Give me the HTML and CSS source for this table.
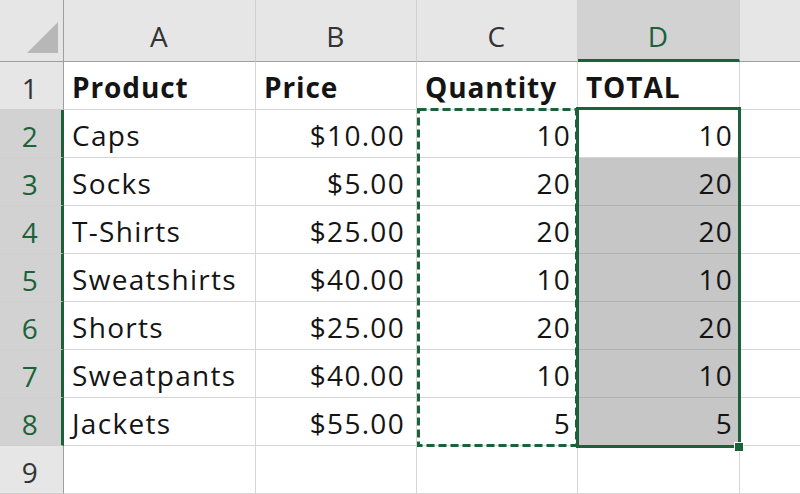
FILE: index.html
```html
<!DOCTYPE html>
<html>
<head>
<meta charset="utf-8">
<link rel="stylesheet" href="styles.css">
</head>
<body>
<div class="sheet">
  <div class="grid">
    <div class="hd corner"><svg class="tri" width="64" height="62" viewBox="0 0 64 62"><polygon points="27,53 58,22 58,53" fill="#b7b7b7"/></svg></div>
    <div class="hd col">A</div>
    <div class="hd col">B</div>
    <div class="hd col">C</div>
    <div class="hd col sel-col">D</div>
    <div class="hd col last"></div>

    <div class="hd row">1</div>
    <div class="c b">Product</div>
    <div class="c b">Price</div>
    <div class="c b">Quantity</div>
    <div class="c b">TOTAL</div>
    <div class="c last"></div>

    <div class="hd row sel-row">2</div>
    <div class="c">Caps</div>
    <div class="c n cur">$10.00</div>
    <div class="c n">10</div>
    <div class="c n">10</div>
    <div class="c last"></div>

    <div class="hd row sel-row">3</div>
    <div class="c">Socks</div>
    <div class="c n cur">$5.00</div>
    <div class="c n">20</div>
    <div class="c n fill">20</div>
    <div class="c last"></div>

    <div class="hd row sel-row">4</div>
    <div class="c">T-Shirts</div>
    <div class="c n cur">$25.00</div>
    <div class="c n">20</div>
    <div class="c n fill">20</div>
    <div class="c last"></div>

    <div class="hd row sel-row">5</div>
    <div class="c">Sweatshirts</div>
    <div class="c n cur">$40.00</div>
    <div class="c n">10</div>
    <div class="c n fill">10</div>
    <div class="c last"></div>

    <div class="hd row sel-row">6</div>
    <div class="c">Shorts</div>
    <div class="c n cur">$25.00</div>
    <div class="c n">20</div>
    <div class="c n fill">20</div>
    <div class="c last"></div>

    <div class="hd row sel-row">7</div>
    <div class="c">Sweatpants</div>
    <div class="c n cur">$40.00</div>
    <div class="c n">10</div>
    <div class="c n fill">10</div>
    <div class="c last"></div>

    <div class="hd row sel-row">8</div>
    <div class="c">Jackets</div>
    <div class="c n cur">$55.00</div>
    <div class="c n">5</div>
    <div class="c n fill">5</div>
    <div class="c last"></div>

    <div class="hd row">9</div>
    <div class="c"></div>
    <div class="c"></div>
    <div class="c"></div>
    <div class="c"></div>
    <div class="c last"></div>
  </div>
  <svg class="overlay" width="800" height="494" viewBox="0 0 800 494">
    <rect x="418.5" y="109.5" width="158" height="336" fill="none" stroke="#1b623a" stroke-width="3" stroke-dasharray="8 4"/>
    <rect x="577.5" y="108.5" width="162" height="338" fill="none" stroke="#1b623a" stroke-width="3"/>
    <rect x="734.5" y="442.5" width="9" height="9" fill="#1b623a" stroke="#ffffff" stroke-width="1"/>
  </svg>
</div>
</body>
</html>
```
FILE: styles.css
```css
html, body {
  margin: 0;
  padding: 0;
  background: #ffffff;
  overflow: hidden;
}
.sheet {
  position: relative;
  width: 800px;
  height: 494px;
  overflow: hidden;
}
.grid {
  display: grid;
  grid-template-columns: 64px 192px 161px 161px 162px 60px;
  grid-template-rows: 62px repeat(9, 48px);
  font-family: "Open Sans", "Liberation Sans", sans-serif;
  font-size: 28px;
  letter-spacing: 1.3px;
  color: #141414;
}
.hd {
  background: #e6e6e6;
  color: #333333;
  box-sizing: border-box;
  display: flex;
  align-items: center;
  justify-content: center;
}
.corner {
  position: relative;
  border-right: 1px solid #9e9e9e;
  border-bottom: 1px solid #9e9e9e;
}
.tri {
  position: absolute;
  left: 0;
  top: 0;
}
.col {
  border-right: 1px solid #cfcfcf;
  border-bottom: 1px solid #9e9e9e;
  padding-top: 10px;
}
.col.last {
  border-right: none;
}
.sel-col {
  background: #d2d2d2;
  color: #1b623a;
  border-bottom: 3px solid #1b623a;
  padding-top: 12px;
}
.row {
  border-right: 1px solid #9e9e9e;
  border-bottom: 1px solid #cfcfcf;
  justify-content: flex-end;
  padding-right: 24px;
  padding-top: 4px;
  line-height: 44px;
}
.sel-row {
  background: #d2d2d2;
  color: #1b623a;
  border-right: 3px solid #1b623a;
  padding-right: 22px;
}
.c {
  box-sizing: border-box;
  border-right: 1px solid #d6d6d6;
  border-bottom: 1px solid #d6d6d6;
  padding: 3px 8px 0 8px;
  line-height: 44px;
  white-space: nowrap;
  overflow: hidden;
}
.c.last {
  border-right: none;
}
.b {
  font-weight: 700;
  letter-spacing: 0.9px;
}
.n {
  text-align: right;
  padding-right: 6px;
}
.cur {
  padding-right: 11px;
}
.fill {
  background: #c6c6c6;
  border-bottom-color: #b2b2b2;
}
.overlay {
  position: absolute;
  left: 0;
  top: 0;
  pointer-events: none;
}
```
